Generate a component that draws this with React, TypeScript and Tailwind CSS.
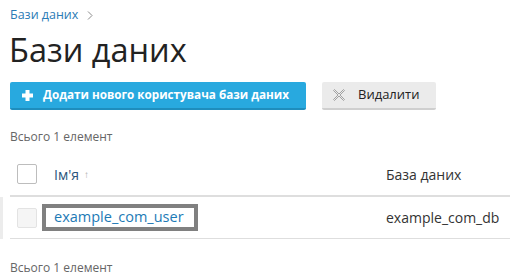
function PlusIcon() {
  return (
    <svg width="11" height="11" viewBox="0 0 11 11" className="shrink-0">
      <rect x="3.5" y="0" width="4" height="11" fill="#fff" />
      <rect x="0" y="3.5" width="11" height="4" fill="#fff" />
    </svg>
  );
}

function CrossIcon() {
  return (
    <svg width="12" height="12" viewBox="0 0 12 12" className="shrink-0">
      <path
        d="M1.5 0.5 L6 5 L10.5 0.5 L11.5 1.5 L7 6 L11.5 10.5 L10.5 11.5 L6 7 L1.5 11.5 L0.5 10.5 L5 6 L0.5 1.5 Z"
        fill="none"
        stroke="#9a9a9a"
        strokeWidth="0.9"
      />
    </svg>
  );
}

function Chevron() {
  return (
    <svg width="6" height="9" viewBox="0 0 6 9" className="shrink-0">
      <path d="M1 0.5 L5 4.5 L1 8.5" fill="none" stroke="#8a8a8a" strokeWidth="1" />
    </svg>
  );
}

export default function App() {
  return (
    <div
      className="w-[510px] h-[279px] overflow-hidden bg-white text-[#333]"
      style={{ fontFamily: '"Open Sans", "Noto Sans", sans-serif' }}
    >
      {/* Breadcrumb */}
      <div className="pl-[10px] pt-[7px] flex items-center gap-[9px] text-[12.5px] leading-[16px]">
        <a className="text-[#2a7bb6]">Бази даних</a>
        <Chevron />
      </div>

      {/* Title */}
      <h1 className="pl-[9px] mt-[7px] text-[32.5px] leading-[40px] text-[#222] font-normal">Бази даних</h1>

      {/* Toolbar */}
      <div className="pl-[10px] mt-[12px] flex items-center gap-[16px]">
        <button className="h-[28px] w-[296px] flex items-center gap-[10px] pl-[12px] bg-[#28a9df] border-b-2 border-[#1e8dbd] rounded-[2px] text-white text-[11.7px] font-bold whitespace-nowrap">
          <PlusIcon />
          <span>Додати нового користувача бази даних</span>
        </button>
        <button className="h-[28px] w-[114px] flex items-center gap-[13px] pl-[11px] bg-[#ebebeb] border-b-2 border-[#cfcfcf] rounded-[2px] text-[#222] text-[13px]">
          <CrossIcon />
          <span>Видалити</span>
        </button>
      </div>

      {/* Count */}
      <div className="pl-[10px] mt-[19px] text-[12px] leading-[16px] text-[#666]">Всього 1 елемент</div>

      {/* Table header */}
      <div className="ml-[10px] mt-[8px] h-[44px] flex items-center border-b-2 border-[#dedede]">
        <div className="w-[44px] pl-[7px] flex items-center">
          <div className="w-[20px] h-[20px] border border-[#bdbdbd] rounded-[2px] bg-white" />
        </div>
        <div className="w-[332px] flex items-center gap-[5px] text-[14px]">
          <span className="text-[#2b557c]">Ім'я</span>
          <span className="text-[#aaa] text-[10px]">↑</span>
        </div>
        <div className="text-[14px] text-[#333]">База даних</div>
      </div>

      {/* Table body */}
      <div className="border-l-[3px] border-[#ececec]">
        <div className="ml-[7px] h-[42px] flex items-center border-b border-[#dedede]">
          <div className="w-[44px] pl-[7px] flex items-center">
            <div className="w-[20px] h-[20px] border border-[#e3e3e3] rounded-[2px] bg-[#f5f5f5]" />
          </div>
          <div className="w-[332px] flex items-center -ml-[12px]">
            <div className="h-[27px] w-[156px] border-[4px] border-[#808080] bg-white flex items-center pl-[8px]">
              <a className="text-[14.5px] text-[#1c7ab6] leading-none">example_com_user</a>
            </div>
          </div>
          <div className="text-[14px] text-[#333] ml-[12px]">example_com_db</div>
        </div>
      </div>

      {/* Count */}
      <div className="pl-[10px] mt-[21px] text-[12px] leading-[16px] text-[#666]">Всього 1 елемент</div>
    </div>
  );
}
